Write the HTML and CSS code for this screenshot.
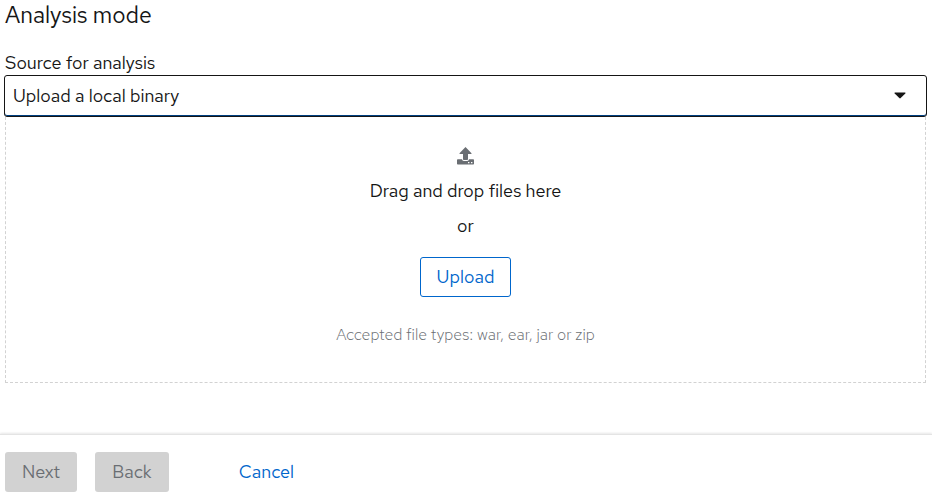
FILE: index.html
```html
<!DOCTYPE html>
<html lang="en">
<head>
<meta charset="utf-8">
<title>Analysis mode</title>
<link rel="stylesheet" href="styles.css">
</head>
<body>
<main class="wizard-body">
  <h1 class="title">Analysis mode</h1>
  <form class="form">
    <label class="label" for="source">Source for analysis</label>
    <div class="select">
      <select class="select-control" id="source">
        <option>Upload a local binary</option>
      </select>
      <svg class="select-caret" viewBox="0 0 12 7" aria-hidden="true"><path d="M1 .5h10q.9.2.3 1L6.7 6.1q-.7.6-1.4 0L.7 1.5Q.1.7 1 .5z"/></svg>
    </div>
    <section class="dropzone">
      <svg class="upload-icon" viewBox="0 0 18 18" aria-hidden="true">
        <path d="M8.500 0 14.500 6.200q.4.8-.5.8H11v5.200q0 .8-.8.8H6.800q-.8 0-.8-.8V7H3q-.9 0-.5-.8z"/>
        <path fill-rule="evenodd" d="M.8 12.200H5q.2 1.800 1.800 1.800h3.400q1.600 0 1.800-1.800h4.200q.8 0 .8.800V16.700q0 .8-.8.800H.8q-.8 0-.8-.8V13q0-.8.800-.8zM11 15v1.200h1.400V15zM14 15v1.200h1.400V15z"/>
      </svg>
      <p class="drop-text">Drag and drop files here</p>
      <p class="drop-text">or</p>
      <button class="button button-secondary" type="button">Upload</button>
      <p class="hint">Accepted file types: war, ear, jar or zip</p>
    </section>
  </form>
</main>
<footer class="footer">
  <button class="button button-disabled" type="button" disabled>Next</button>
  <button class="button button-disabled" type="button" disabled>Back</button>
  <button class="button button-link" type="button">Cancel</button>
</footer>
</body>
</html>
```
FILE: styles.css
```css
* { box-sizing: border-box; }

body {
  display: flex;
  flex-direction: column;
  min-height: 100vh;
  margin: 0;
  background: #fff;
  color: #151515;
  font-family: "Red Hat Text", Lato, "Liberation Sans", sans-serif;
  font-size: 18px;
  font-weight: 400;
  line-height: 27px;
}

.wizard-body { flex: 1; padding: 0 6px 0 5px; }

.title {
  margin: 0 0 20px;
  font-size: 23px;
  font-weight: 400;
  line-height: 30px;
}

.form { display: flex; flex-direction: column; }

.label { line-height: 25px; }

.select { position: relative; margin: 0 -1px; }

.select-control {
  display: block;
  width: 100%;
  height: 42px;
  padding: 0 40px 1px 8px;
  appearance: none;
  border: 1px solid #151515;
  border-radius: 3px;
  background: #fff;
  box-shadow: inset 0 -1px #004080;
  color: #151515;
  font: inherit;
}

.select-caret {
  position: absolute;
  top: 17px;
  right: 21px;
  width: 12px;
  height: 7px;
  fill: #151515;
  pointer-events: none;
}

.dropzone {
  display: flex;
  flex-direction: column;
  align-items: center;
  padding: 30px 24px 33px;
  border: 1px dashed #d2d2d2;
  border-top: 0;
}

.upload-icon {
  width: 18px;
  height: 18px;
  margin-bottom: 12px;
  fill: #6a6e73;
}

.drop-text { margin: 0 0 8px; }

.button {
  height: 40px;
  padding: 0 16px 2px;
  border: 1px solid transparent;
  border-radius: 3px;
  font: inherit;
}

.button-secondary {
  margin: 10px 0 24px;
  border-color: #06c;
  background: #fff;
  color: #06c;
}

.hint {
  margin: 0;
  color: #6a6e73;
  font-size: 16px;
  font-weight: 300;
  line-height: 28px;
}

.footer {
  display: flex;
  gap: 18px;
  padding: 17px 5px 5px;
  border-top: 1px solid #e4e4e4;
  box-shadow: 0 -1px 2px #1515151a;
}

.button-disabled { background: #d2d2d2; color: #6a6e73; }

.button-link { margin-left: 35px; background: none; color: #06c; }
```
